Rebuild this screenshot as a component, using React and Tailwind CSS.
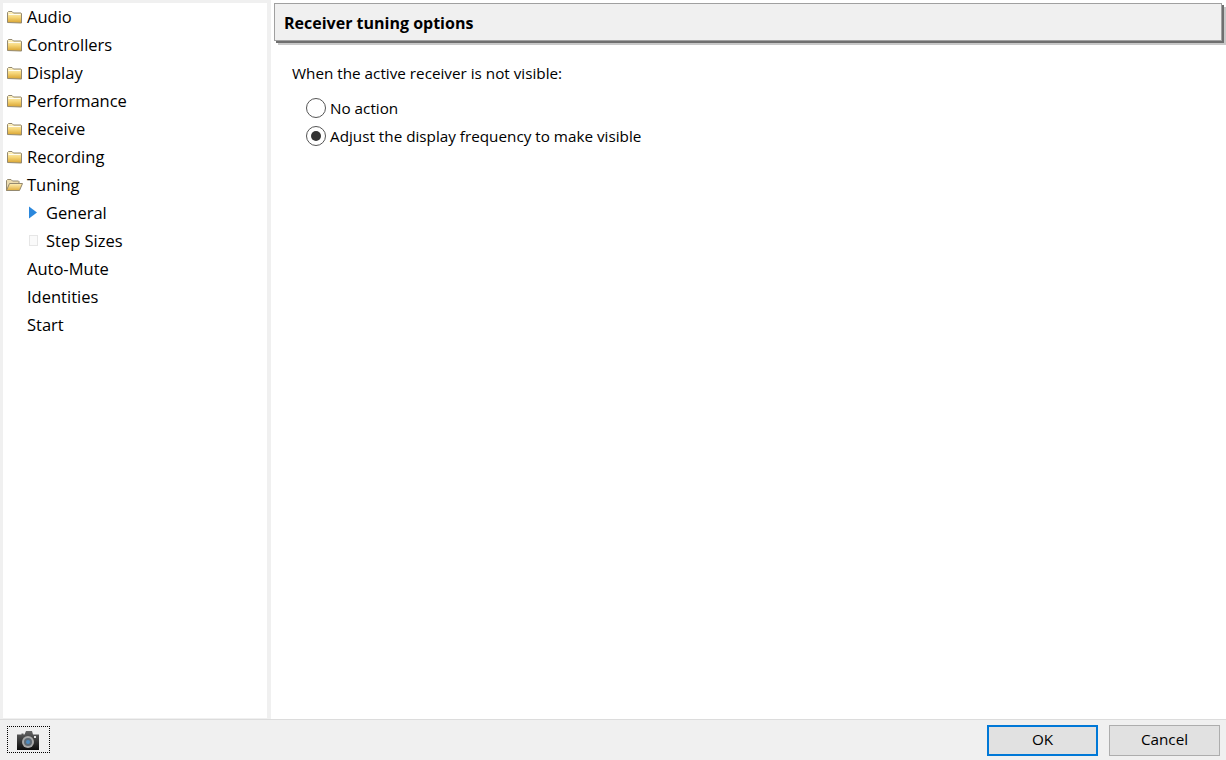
import React from "react";

const topItems = ["Audio", "Controllers", "Display", "Performance", "Receive", "Recording"];
const lastItems = ["Auto-Mute", "Identities", "Start"];

const ClosedFolder = () => (
  <svg width="15" height="13" viewBox="0 0 15 13" className="shrink-0">
    <defs>
      <linearGradient id="folderFill" x1="0" y1="0" x2="0" y2="1">
        <stop offset="0" stopColor="#fff6cf" />
        <stop offset="0.5" stopColor="#f6d678" />
        <stop offset="1" stopColor="#d8a22e" />
      </linearGradient>
    </defs>
    <path d="M0.500 11.500V1.500l1-1h3.500l1.500 1.500h7.500l.5.500v9.500z" fill="url(#folderFill)" stroke="#94896f" />
    <path d="M1.500 3.500h12" stroke="#fffdf0" />
  </svg>
);

const OpenFolder = () => (
  <svg width="17" height="13" viewBox="0 0 17 13" className="shrink-0">
    <defs>
      <linearGradient id="openFill" x1="0" y1="0" x2="0" y2="1">
        <stop offset="0" stopColor="#fff0b8" />
        <stop offset="1" stopColor="#e0ad3c" />
      </linearGradient>
    </defs>
    <path d="M0.500 11.500V1.500l1-1h3.500l1.500 1.500h6l.5.500V5" fill="#ecdcb0" stroke="#94896f" />
    <path d="M0.500 11.500L3.500 4.500h13l-3 7z" fill="url(#openFill)" stroke="#94896f" />
  </svg>
);

const Camera = () => (
  <svg width="22" height="19" viewBox="0 0 22 19">
    <defs>
      <linearGradient id="camBody" x1="0" y1="0" x2="0" y2="1">
        <stop offset="0" stopColor="#666666" />
        <stop offset="1" stopColor="#0c0c0c" />
      </linearGradient>
    </defs>
    <path d="M0 19V3.500h4.500V2.500h2v1h1L9 0h6l1 3.500h6V19z" fill="url(#camBody)" />
    <circle cx="11" cy="11" r="6" fill="#a9a9a9" />
    <circle cx="11" cy="11" r="4" fill="#5f6a74" />
    <circle cx="11" cy="11" r="2" fill="#4f8cc0" />
    <rect x="17" y="5" width="2" height="2" fill="#e4e4e4" />
  </svg>
);

const TreeRow = ({ icon, indent, children }) => (
  <div className={`flex h-[28px] items-center ${indent}`}>
    {icon}
    <span>{children}</span>
  </div>
);

export default function App() {
  return (
    <div
      className="flex h-[760px] w-[1226px] flex-col overflow-hidden bg-[#f0f0f0] text-[15.25px] text-black"
      style={{ fontFamily: '"Open Sans", "Noto Sans", sans-serif' }}
    >
      <div className="flex min-h-0 flex-1">
        {/* Tree */}
        <div className="ml-[3px] mt-[3px] mb-px w-[264px] bg-white text-[16.5px]">
          {topItems.map((name) => (
            <TreeRow key={name} indent="pl-[4px]" icon={<span className="mr-[5px] flex"><ClosedFolder /></span>}>
              {name}
            </TreeRow>
          ))}
          <TreeRow indent="pl-[3px]" icon={<span className="mr-[4px] flex"><OpenFolder /></span>}>
            Tuning
          </TreeRow>
          <TreeRow
            indent="pl-[26px]"
            icon={
              <svg width="17" height="14" viewBox="0 0 17 14" className="shrink-0">
                <path d="M0 0.500L8 6.500L0 12.500z" fill="#2b87dc" />
              </svg>
            }
          >
            General
          </TreeRow>
          <TreeRow
            indent="pl-[26px]"
            icon={<span className="mr-[8px] mb-[2px] h-[11px] w-[9px] shrink-0 border border-[#e6e6e6] bg-[#fafafa]" />}
          >
            Step Sizes
          </TreeRow>
          {lastItems.map((name) => (
            <TreeRow key={name} indent="pl-[24px]">
              {name}
            </TreeRow>
          ))}
        </div>

        {/* Options panel */}
        <div className="ml-[4px] flex-1 bg-white pt-[3px] pl-[3px] pr-[2px]">
          <div className="flex h-[38px] w-[948px] items-center border border-[#a0a0a0] bg-[#f0f0f0] pl-[9px] pt-[2px] text-[16px] font-bold shadow-[2px_2px_0_#6f6f6f,4px_4px_0_#c8c8c8]">
            Receiver tuning options
          </div>
          <div className="pl-[18px] pt-[20px]">
            <p className="h-[24px] leading-[24px]">When the active receiver is not visible:</p>
            <div className="mt-[9px] flex flex-col pl-[14px]">
              <label className="flex h-[28px] items-center gap-[4px]">
                <span className="h-[20px] w-[20px] rounded-full border border-[#555] bg-white" />
                No action
              </label>
              <label className="flex h-[28px] items-center gap-[4px]">
                <span className="flex h-[20px] w-[20px] items-center justify-center rounded-full border border-[#555] bg-white">
                  <span className="h-[10px] w-[10px] rounded-full bg-[#333]" />
                </span>
                Adjust the display frequency to make visible
              </label>
            </div>
          </div>
        </div>
      </div>

      {/* Bottom bar */}
      <div className="flex h-[41px] shrink-0 items-center border-t border-[#dcdcdc] pl-[7px] pr-[6px]">
        <button className="mt-[-1px] flex h-[27px] w-[43px] items-center justify-center border border-dotted border-black pr-[2px] pt-[2px]">
          <Camera />
        </button>
        <button className="ml-auto h-[31px] w-[111px] border-2 border-[#0078d7] bg-[#e1e1e1] pb-[2px]">OK</button>
        <button className="ml-[11px] h-[31px] w-[111px] border border-[#adadad] bg-[#e1e1e1] pb-[2px]">Cancel</button>
      </div>
    </div>
  );
}
